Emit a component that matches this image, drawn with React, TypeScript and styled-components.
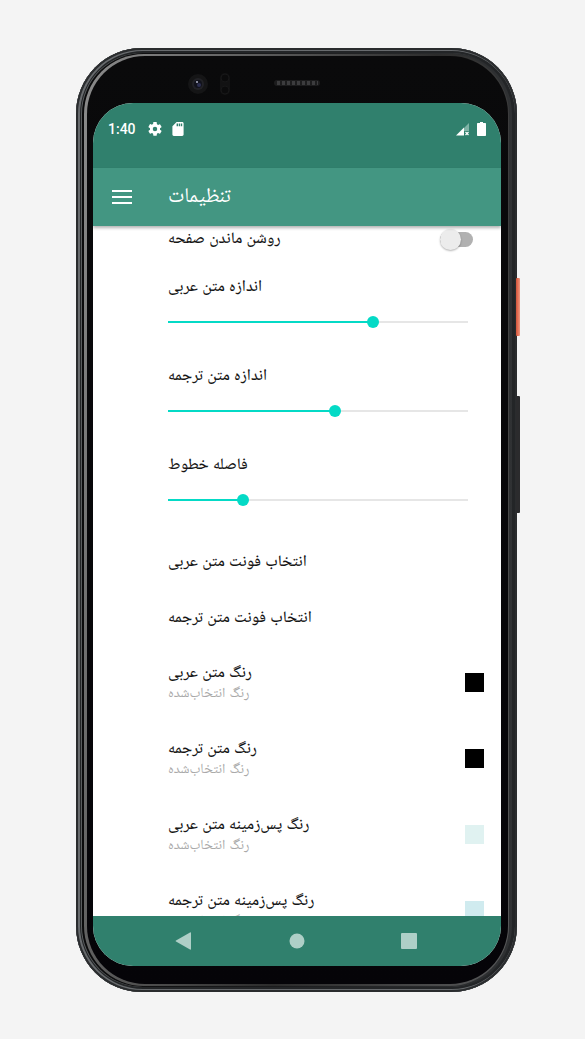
import React, { useState } from "react";
import styled, { createGlobalStyle } from "styled-components";

const GlobalStyle = createGlobalStyle`
  * { box-sizing: border-box; }
  body { margin: 0; background: #f4f4f4; font-family: Inter, "Noto Naskh Arabic UI", "Noto Sans Arabic", sans-serif; }
`;

const Page = styled.main`
  padding: 48px 68px 47px 76px;
`;

const Phone = styled.div`
  position: relative;
  padding: 6px 8px;
  border-radius: 66px;
  background: linear-gradient(to right, #0a0a0b, #303234);
  box-shadow:
    inset 0 0 0 2px #2a2c2e,
    inset 1px 0 0 3px #686b6e,
    inset 0 0 0 5px #232527,
    inset 1px 0 0 5px #595c5e;
`;

const Rim = styled.div`
  padding: 2px 1px 2px 3px;
  border-radius: 60px;
  background: linear-gradient(100deg, #8c8c8c, #6c6c6c 20%, #2c2c2c 60%, #58595a);
`;

const Glass = styled.div`
  padding: 47px 7px 18px 6px;
  border-radius: 58px;
  background: linear-gradient(#0a0a0b, #050408);
`;

const SideKey = styled.span<{ $top: number; $height: number; $color: string }>`
  position: absolute;
  right: -3px;
  width: 4px;
  top: ${(p) => p.$top}px;
  height: ${(p) => p.$height}px;
  border-radius: 1px;
  background: ${(p) => p.$color};
`;

const Hardware = styled.svg`
  position: absolute;
  top: 20px;
  left: 104px;
`;

const Screen = styled.div`
  display: flex;
  flex-direction: column;
  overflow: hidden;
  border-radius: 40px;
  background: #fff;
`;

const StatusBar = styled.div`
  display: flex;
  justify-content: space-between;
  height: 65px;
  padding: 16px 15px 0 15px;
  background: #30806d;
  color: #fff;
`;

const StatusGroup = styled.div<{ $gap: number }>`
  display: flex;
  align-items: center;
  height: 20px;
  gap: ${(p) => p.$gap}px;
`;

const Clock = styled.time`
  font-family: Roboto, sans-serif;
  font-size: 14px;
  font-weight: 500;
`;

const AppBar = styled.header`
  position: relative;
  z-index: 1;
  display: flex;
  align-items: center;
  height: 58px;
  padding-left: 16px;
  gap: 34px;
  background: #439682;
  color: #fff;
  box-shadow: 0 2px 3px rgba(0, 0, 0, 0.3);
`;

const MenuButton = styled.button`
  display: flex;
  align-items: center;
  justify-content: center;
  width: 25px;
  height: 32px;
  padding: 0;
  border: 0;
  background: none;
  color: inherit;
`;

const Title = styled.h1`
  margin: 0;
  padding-top: 2px;
  font-size: 21px;
  font-weight: 400;
  line-height: 28px;
`;

const Settings = styled.section`
  height: 690px;
  overflow: hidden;
  padding-left: 75px;
  color: #161616;
`;

const Label = styled.label`
  font-size: 16px;
  font-weight: 500;
  line-height: 24px;
`;

const ToggleRow = styled.div`
  display: flex;
  align-items: center;
  justify-content: space-between;
  height: 26px;
  padding-right: 28px;
`;

const Switch = styled.input`
  appearance: none;
  position: relative;
  width: 33px;
  height: 15px;
  margin: 0;
  border-radius: 8px;
  background: #b1b1b1;
  &::before {
    content: "";
    position: absolute;
    top: -3px;
    left: 0;
    width: 21px;
    height: 21px;
    border-radius: 50%;
    background: #ececec;
    box-shadow: 0 1px 2px rgba(0, 0, 0, 0.3);
  }
  &:checked { background: #7fe9df; }
  &:checked::before { left: 12px; background: #04dac6; }
`;

const SliderRow = styled.div`
  display: flex;
  flex-direction: column;
  height: 89px;
  padding: 23px 33px 0 0;
`;

const Slider = styled.input<{ $fill: number }>`
  appearance: none;
  width: 100%;
  height: 14px;
  margin: 16px 0 0;
  background: linear-gradient(to right, #04dac6 ${(p) => p.$fill}%, #e6e6e6 ${(p) => p.$fill}%) center / 100% 2px no-repeat;
  &::-webkit-slider-thumb {
    appearance: none;
    width: 12px;
    height: 12px;
    border-radius: 50%;
    background: #04dac6;
  }
`;

const FontList = styled.div`
  display: flex;
  flex-direction: column;
  padding-top: 15px;
`;

const FontButton = styled.button`
  height: 56px;
  padding: 0;
  border: 0;
  background: none;
  color: inherit;
  font-family: inherit;
  font-size: 16px;
  font-weight: 500;
  line-height: 24px;
  text-align: left;
`;

const ColorButton = styled.button`
  display: flex;
  align-items: center;
  justify-content: space-between;
  width: 100%;
  height: 76px;
  padding: 0 17px 4px 0;
  border: 0;
  background: none;
  color: inherit;
  font-family: inherit;
  text-align: left;
`;

const ColorText = styled.span`
  display: flex;
  flex-direction: column;
  padding-top: 2px;
  font-size: 16px;
  font-weight: 500;
  line-height: 22px;
`;

const Summary = styled.small`
  color: #a9a9a9;
  font-size: 14px;
  font-weight: 400;
  line-height: 20px;
`;

const Swatch = styled.span<{ $color: string }>`
  width: 19px;
  height: 19px;
  background: ${(p) => p.$color};
`;

const NavBar = styled.nav`
  display: flex;
  align-items: center;
  justify-content: space-between;
  height: 50px;
  padding: 0 83px 0 80px;
  background: #30806d;
`;

const NavButton = styled.button`
  display: flex;
  padding: 0;
  border: 0;
  background: none;
  color: #aecfc7;
`;

function SliderSetting({ id, label, initial }: { id: string; label: string; initial: number }) {
  const [value, setValue] = useState(initial);
  return (
    <SliderRow>
      <Label htmlFor={id}>{label}</Label>
      <Slider id={id} type="range" min={0} max={100} value={value} $fill={value} onChange={(e) => setValue(Number(e.target.value))} />
    </SliderRow>
  );
}

const sliders = [
  { id: "arabic-size", label: "اندازه متن عربی", initial: 69 },
  { id: "translation-size", label: "اندازه متن ترجمه", initial: 56 },
  { id: "line-spacing", label: "فاصله خطوط", initial: 24 },
];

const colors = [
  { label: "رنگ متن عربی", color: "#000" },
  { label: "رنگ متن ترجمه", color: "#000" },
  { label: "رنگ پس‌زمینه متن عربی", color: "#e0f2f1" },
  { label: "رنگ پس‌زمینه متن ترجمه", color: "#d0ebef" },
];

export default function App() {
  return (
    <Page>
      <GlobalStyle />
      <Phone>
        <SideKey $top={230} $height={58} $color="linear-gradient(to right, #c9573f, #e0654a 30%, #f09a82)" />
        <SideKey $top={348} $height={117} $color="#2b2b2d" />
        <Rim>
          <Glass>
            <Hardware width="145" height="32" viewBox="0 0 145 32" aria-hidden="true">
              <circle cx="18" cy="16" r="10" fill="#151516" />
              <circle cx="18" cy="16" r="6" fill="#222226" />
              <circle cx="18" cy="16" r="4" fill="#11121c" />
              <circle cx="19" cy="17" r="2" fill="#2d3052" />
              <circle cx="17" cy="14" r="1" fill="#b4b8cc" />
              <rect x="40" y="5" width="10" height="22" rx="5" fill="#121213" />
              <circle cx="45" cy="10" r="4" fill="#0b0b0c" stroke="#171718" />
              <circle cx="45" cy="22" r="4" fill="#0b0b0c" stroke="#171718" />
              <rect x="94" y="12" width="46" height="6" rx="3" fill="#1c1c1d" />
              <path d="M97 15H138" stroke="#3c3c3e" strokeWidth="4" strokeDasharray="3 2" />
            </Hardware>
            <Screen>
              <StatusBar>
                <StatusGroup $gap={12}>
                  <Clock>1:40</Clock>
                  <StatusGroup $gap={10}>
                    <svg width="14" height="14" viewBox="2 2 20 20" fill="currentColor" aria-hidden="true">
                      <path d="M19.14 12.94c.04-.3.06-.61.06-.94s-.02-.64-.07-.94l2.03-1.58a.49.49 0 0 0 .12-.61l-1.92-3.32a.49.49 0 0 0-.59-.22l-2.39.96a7 7 0 0 0-1.62-.94l-.36-2.54A.48.48 0 0 0 13.92 2h-3.84c-.24 0-.43.17-.47.41l-.36 2.54c-.59.24-1.13.57-1.62.94l-2.39-.96a.48.48 0 0 0-.59.22L2.74 8.87a.48.48 0 0 0 .12.61l2.03 1.58a7 7 0 0 0 0 1.88l-2.03 1.58a.49.49 0 0 0-.12.61l1.92 3.32c.12.22.37.29.59.22l2.39-.96c.5.38 1.03.7 1.62.94l.36 2.54c.05.24.24.41.48.41h3.84c.24 0 .44-.17.47-.41l.36-2.54a7 7 0 0 0 1.62-.94l2.39.96c.22.08.47 0 .59-.22l1.92-3.32a.48.48 0 0 0-.12-.61zM12 15.2a3.2 3.2 0 1 1 0-6.4 3.2 3.2 0 0 1 0 6.4z" />
                    </svg>
                    <svg width="12" height="14" viewBox="4 2 16 20" fill="currentColor" aria-hidden="true">
                      <path d="M18 2h-8L4 8v12c0 1.1.9 2 2 2h12c1.1 0 2-.9 2-2V4c0-1.1-.9-2-2-2zm-6 6h-2V4h2zm3 0h-2V4h2zm3 0h-2V4h2z" />
                    </svg>
                  </StatusGroup>
                </StatusGroup>
                <StatusGroup $gap={7}>
                  <svg width="14" height="13" viewBox="0 0 14 13" aria-hidden="true">
                    <path d="M13 0V8H8V5z" fill="#7fb3a6" />
                    <path d="M0 12.500L8 4.500V12.500z" fill="#fff" />
                    <path d="M9.500 9l3 3M12.500 9l-3 3" stroke="#fff" strokeWidth="1.200" />
                  </svg>
                  <svg width="9" height="14" viewBox="0 0 9 14" fill="#fff" aria-hidden="true">
                    <path d="M3 0h3v1h2.300q.7 0 .7.700v11.600q0 .7-.7.700H.7q-.7 0-.7-.7V1.700Q0 1 .7 1H3z" />
                  </svg>
                </StatusGroup>
              </StatusBar>
              <AppBar>
                <MenuButton aria-label="منو">
                  <svg width="20" height="14" viewBox="0 0 20 14" fill="currentColor" aria-hidden="true">
                    <path d="M0 0h20v2H0zM0 6h20v2H0zM0 12h20v2H0z" />
                  </svg>
                </MenuButton>
                <Title>تنظیمات</Title>
              </AppBar>
              <Settings>
                <ToggleRow>
                  <Label htmlFor="keep-awake">روشن ماندن صفحه</Label>
                  <Switch id="keep-awake" type="checkbox" role="switch" />
                </ToggleRow>
                {sliders.map((s) => (
                  <SliderSetting key={s.id} {...s} />
                ))}
                <FontList>
                  <FontButton>انتخاب فونت متن عربی</FontButton>
                  <FontButton>انتخاب فونت متن ترجمه</FontButton>
                </FontList>
                {colors.map((c) => (
                  <ColorButton key={c.label}>
                    <ColorText>
                      {c.label}
                      <Summary>رنگ انتخاب‌شده</Summary>
                    </ColorText>
                    <Swatch $color={c.color} />
                  </ColorButton>
                ))}
              </Settings>
              <NavBar>
                <NavButton aria-label="بازگشت">
                  <svg width="20" height="18" viewBox="0 0 20 18" fill="currentColor" aria-hidden="true">
                    <path d="M17 .5q1-.5 1 .5v16q0 1-1 .5L3 9.500q-1-.5 0-1z" />
                  </svg>
                </NavButton>
                <NavButton aria-label="خانه">
                  <svg width="16" height="16" viewBox="0 0 16 16" fill="currentColor" aria-hidden="true">
                    <circle cx="8" cy="8" r="7.500" />
                  </svg>
                </NavButton>
                <NavButton aria-label="برنامه‌های اخیر">
                  <svg width="18" height="16" viewBox="0 0 18 16" fill="currentColor" aria-hidden="true">
                    <rect x="1" width="16" height="16" rx="1" />
                  </svg>
                </NavButton>
              </NavBar>
            </Screen>
          </Glass>
        </Rim>
      </Phone>
    </Page>
  );
}
